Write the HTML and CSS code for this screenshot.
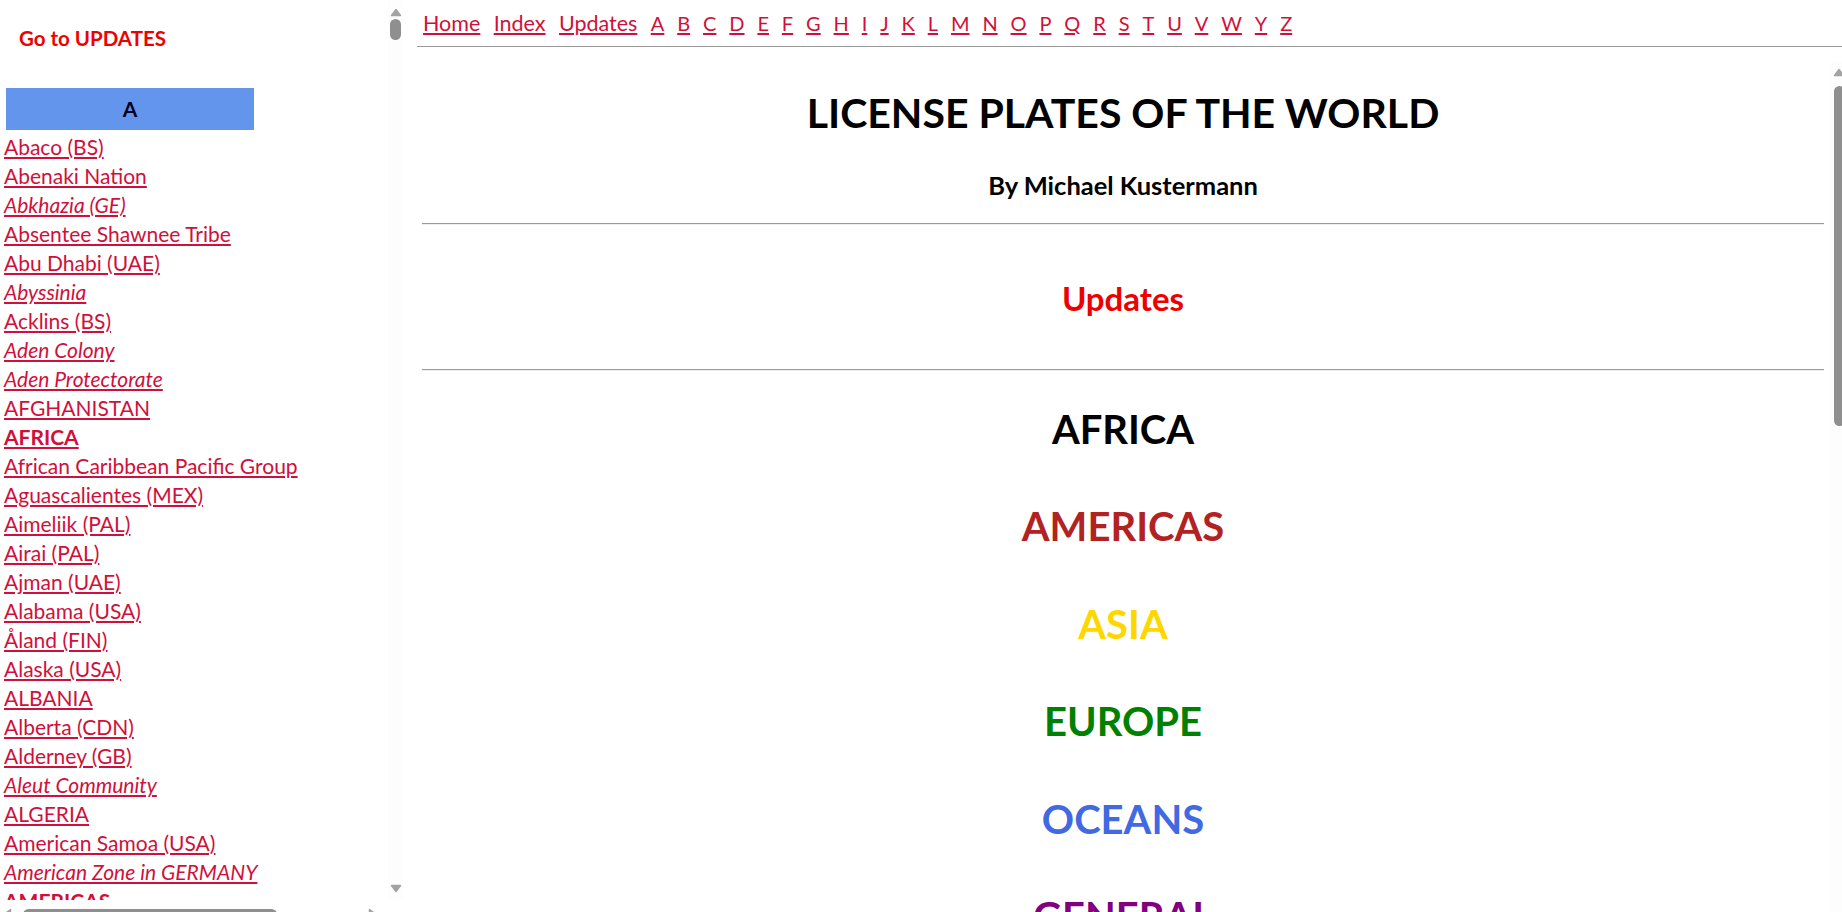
FILE: index.html
```html
<!DOCTYPE html>
<html lang="en">
<head>
<meta charset="utf-8">
<title>License Plates of the World</title>
<link rel="stylesheet" href="styles.css">
</head>
<body>
<div class="page">
  <aside class="left">
    <div class="left-body">
      <div class="left-content">
        <p class="goto"><a href="#updates">Go to UPDATES</a></p>
        <div class="letter-bar">A</div>
        <ul class="index">
          <li><a href="#">Abaco (BS)</a></li>
          <li><a href="#">Abenaki Nation</a></li>
          <li><a href="#"><i>Abkhazia (GE)</i></a></li>
          <li><a href="#">Absentee Shawnee Tribe</a></li>
          <li><a href="#">Abu Dhabi (UAE)</a></li>
          <li><a href="#"><i>Abyssinia</i></a></li>
          <li><a href="#">Acklins (BS)</a></li>
          <li><a href="#"><i>Aden Colony</i></a></li>
          <li><a href="#"><i>Aden Protectorate</i></a></li>
          <li><a href="#">AFGHANISTAN</a></li>
          <li><a href="#"><b>AFRICA</b></a></li>
          <li><a href="#">African Caribbean Pacific Group</a></li>
          <li><a href="#">Aguascalientes (MEX)</a></li>
          <li><a href="#">Aimeliik (PAL)</a></li>
          <li><a href="#">Airai (PAL)</a></li>
          <li><a href="#">Ajman (UAE)</a></li>
          <li><a href="#">Alabama (USA)</a></li>
          <li><a href="#">Åland (FIN)</a></li>
          <li><a href="#">Alaska (USA)</a></li>
          <li><a href="#">ALBANIA</a></li>
          <li><a href="#">Alberta (CDN)</a></li>
          <li><a href="#">Alderney (GB)</a></li>
          <li><a href="#"><i>Aleut Community</i></a></li>
          <li><a href="#">ALGERIA</a></li>
          <li><a href="#">American Samoa (USA)</a></li>
          <li><a href="#"><i>American Zone in GERMANY</i></a></li>
          <li><a href="#"><b>AMERICAS</b></a></li>
          <li><a href="#">Andorra</a></li>
        </ul>
      </div>
      <div class="vscroll left-vscroll">
        <svg class="arrow" width="12" height="9" viewBox="0 0 12 9"><path d="M1.5 7.5 L6 1.5 L10.5 7.5 Z"/></svg>
        <span class="thumb left-thumb"></span>
        <span class="spacer"></span>
        <svg class="arrow" width="12" height="9" viewBox="0 0 12 9"><path d="M1.5 1.5 L6 7.5 L10.5 1.5 Z"/></svg>
      </div>
    </div>
    <div class="hscroll">
      <div class="hscroll-track">
        <svg class="harrow" width="9" height="12" viewBox="0 0 9 12"><path d="M7.5 1.5 L1.5 6 L7.5 10.5 Z"/></svg>
        <span class="hthumb"></span>
        <span class="spacer"></span>
        <svg class="harrow" width="9" height="12" viewBox="0 0 9 12"><path d="M1.5 1.5 L7.5 6 L1.5 10.5 Z"/></svg>
      </div>
    </div>
  </aside>

  <div class="right">
    <nav class="topnav">
      <div class="navlinks">
        <a class="word" href="#">Home</a>
        <a class="word" href="#">Index</a>
        <a class="word" href="#">Updates</a>
        <a href="#">A</a>
        <a href="#">B</a>
        <a href="#">C</a>
        <a href="#">D</a>
        <a href="#">E</a>
        <a href="#">F</a>
        <a href="#">G</a>
        <a href="#">H</a>
        <a href="#">I</a>
        <a href="#">J</a>
        <a href="#">K</a>
        <a href="#">L</a>
        <a href="#">M</a>
        <a href="#">N</a>
        <a href="#">O</a>
        <a href="#">P</a>
        <a href="#">Q</a>
        <a href="#">R</a>
        <a href="#">S</a>
        <a href="#">T</a>
        <a href="#">U</a>
        <a href="#">V</a>
        <a href="#">W</a>
        <a href="#">Y</a>
        <a href="#">Z</a>
      </div>
      <hr class="navrule">
    </nav>
    <div class="main">
      <div class="main-content">
        <h1 class="title">LICENSE PLATES OF THE WORLD</h1>
        <h3 class="byline">By Michael Kustermann</h3>
        <hr class="rule">
        <h2 class="updates" id="updates">Updates</h2>
        <hr class="rule">
        <div class="continents">
          <h1 class="continent africa">AFRICA</h1>
          <h1 class="continent americas">AMERICAS</h1>
          <h1 class="continent asia">ASIA</h1>
          <h1 class="continent europe">EUROPE</h1>
          <h1 class="continent oceans">OCEANS</h1>
          <h1 class="continent general">GENERAL</h1>
        </div>
      </div>
      <div class="vscroll main-vscroll">
        <svg class="arrow" width="12" height="9" viewBox="0 0 12 9"><path d="M1.5 7.5 L6 1.5 L10.5 7.5 Z"/></svg>
        <span class="thumb main-thumb"></span>
      </div>
    </div>
  </div>
</div>
</body>
</html>
```

FILE: styles.css
```css
html, body {
  margin: 0;
  padding: 0;
  overflow: hidden;
  background: #ffffff;
}

body {
  font-family: Lato, "Liberation Sans", sans-serif;
  color: #000000;
}

a {
  color: #d0103a;
  text-decoration: underline;
  text-underline-offset: 2px;
}

.page {
  display: flex;
  width: 1849px;
  height: 912px;
}

/* ---------- left index frame ---------- */
.left {
  width: 403px;
  flex: none;
  display: flex;
  flex-direction: column;
  height: 912px;
}

.left-body {
  display: flex;
  height: 900px;
  flex: none;
}

.left-content {
  flex: 1;
  overflow: hidden;
  padding-left: 4px;
  font-size: 21px;
}

.goto {
  margin: 0;
  padding: 24px 0 0 15px;
  line-height: 29px;
  font-size: 20.5px;
  font-weight: bold;
}

.goto a {
  color: #ee0000;
  text-decoration: none;
}

.letter-bar {
  margin: 35px 0 0 2px;
  width: 248px;
  height: 42px;
  line-height: 42px;
  background: #6495ed;
  text-align: center;
  font-weight: bold;
  font-size: 21px;
  color: #000022;
}

.index {
  list-style: none;
  margin: 2px 0 0;
  padding: 0;
}

.index li {
  line-height: 29px;
  white-space: nowrap;
}

/* ---------- drawn scrollbars ---------- */
.vscroll {
  width: 15px;
  flex: none;
  display: flex;
  flex-direction: column;
  align-items: center;
  background: #fdfdfd;
}

.left-vscroll {
  padding: 8px 0 7px;
}

.arrow path, .harrow path {
  fill: #a3a3a3;
  stroke: #a3a3a3;
  stroke-width: 1.5;
  stroke-linejoin: round;
}

.thumb {
  width: 11px;
  border-radius: 6px;
  background: #8f8f8f;
  flex: none;
}

.left-thumb {
  margin-top: 2px;
  height: 21px;
}

.spacer {
  flex: 1;
}

.hscroll {
  height: 12px;
  overflow: hidden;
  flex: none;
}

.hscroll-track {
  width: 385px;
  height: 17px;
  display: flex;
  align-items: center;
  padding: 0 8px 0 3px;
  box-sizing: border-box;
}

.hthumb {
  margin-left: 11px;
  width: 254px;
  height: 11px;
  border-radius: 6px;
  background: #8f8f8f;
  margin-top: 11px;
}

.harrow {
  margin-top: 11px;
}

/* ---------- right side ---------- */
.right {
  flex: 1;
  display: flex;
  flex-direction: column;
  min-width: 0;
}

.topnav {
  height: 62px;
  flex: none;
  padding-left: 20px;
  box-sizing: border-box;
}

.navlinks {
  display: flex;
  gap: 12.9px;
  padding-top: 8.5px;
  font-size: 20px;
  line-height: 29px;
  white-space: nowrap;
}

.navlinks .word {
  font-size: 21.5px;
}

.navlinks .word + a {
  margin-left: 0.5px;
}

.navrule {
  margin: 8px 0 0 -6px;
  border: 0;
  border-top: 1px solid #9a9a9a;
  height: 0;
}

.main {
  flex: 1;
  display: flex;
  min-height: 0;
}

.main-content {
  flex: 1;
  overflow: hidden;
  padding: 0 6px 0 19px;
  text-align: center;
}

.main-vscroll {
  padding: 6px 0 0 4px;
  align-items: flex-start;
  box-sizing: border-box;
  width: 19px;
}

.main-vscroll .arrow {
  margin-left: -1px;
}

.main-thumb {
  margin-top: 9px;
  height: 340px;
}

.title {
  margin: 23px 0 0;
  font-size: 41px;
  line-height: 56px;
  font-weight: bold;
}

.byline {
  margin: 25.5px 0 0;
  font-size: 25.5px;
  line-height: 36px;
  font-weight: bold;
}

.rule {
  margin: 0;
  border: 0;
  border-top: 1px solid #9a9a9a;
  border-bottom: 1px solid #eeeeee;
  height: 0;
}

.byline + .rule {
  margin-top: 20px;
}

.updates {
  margin: 52.5px 0 49.5px;
  font-size: 33px;
  line-height: 42px;
  font-weight: bold;
  color: #ee0000;
}

.continents {
  display: flex;
  flex-direction: column;
  gap: 41.5px;
  margin-top: 30px;
}

.continent {
  margin: 0;
  font-size: 40px;
  line-height: 56px;
  font-weight: bold;
}

.africa { color: #000000; }
.americas { color: #b22222; }
.asia { color: #ffd700; }
.europe { color: #008000; }
.oceans { color: #4169e1; }
.general { color: #800080; }
```
